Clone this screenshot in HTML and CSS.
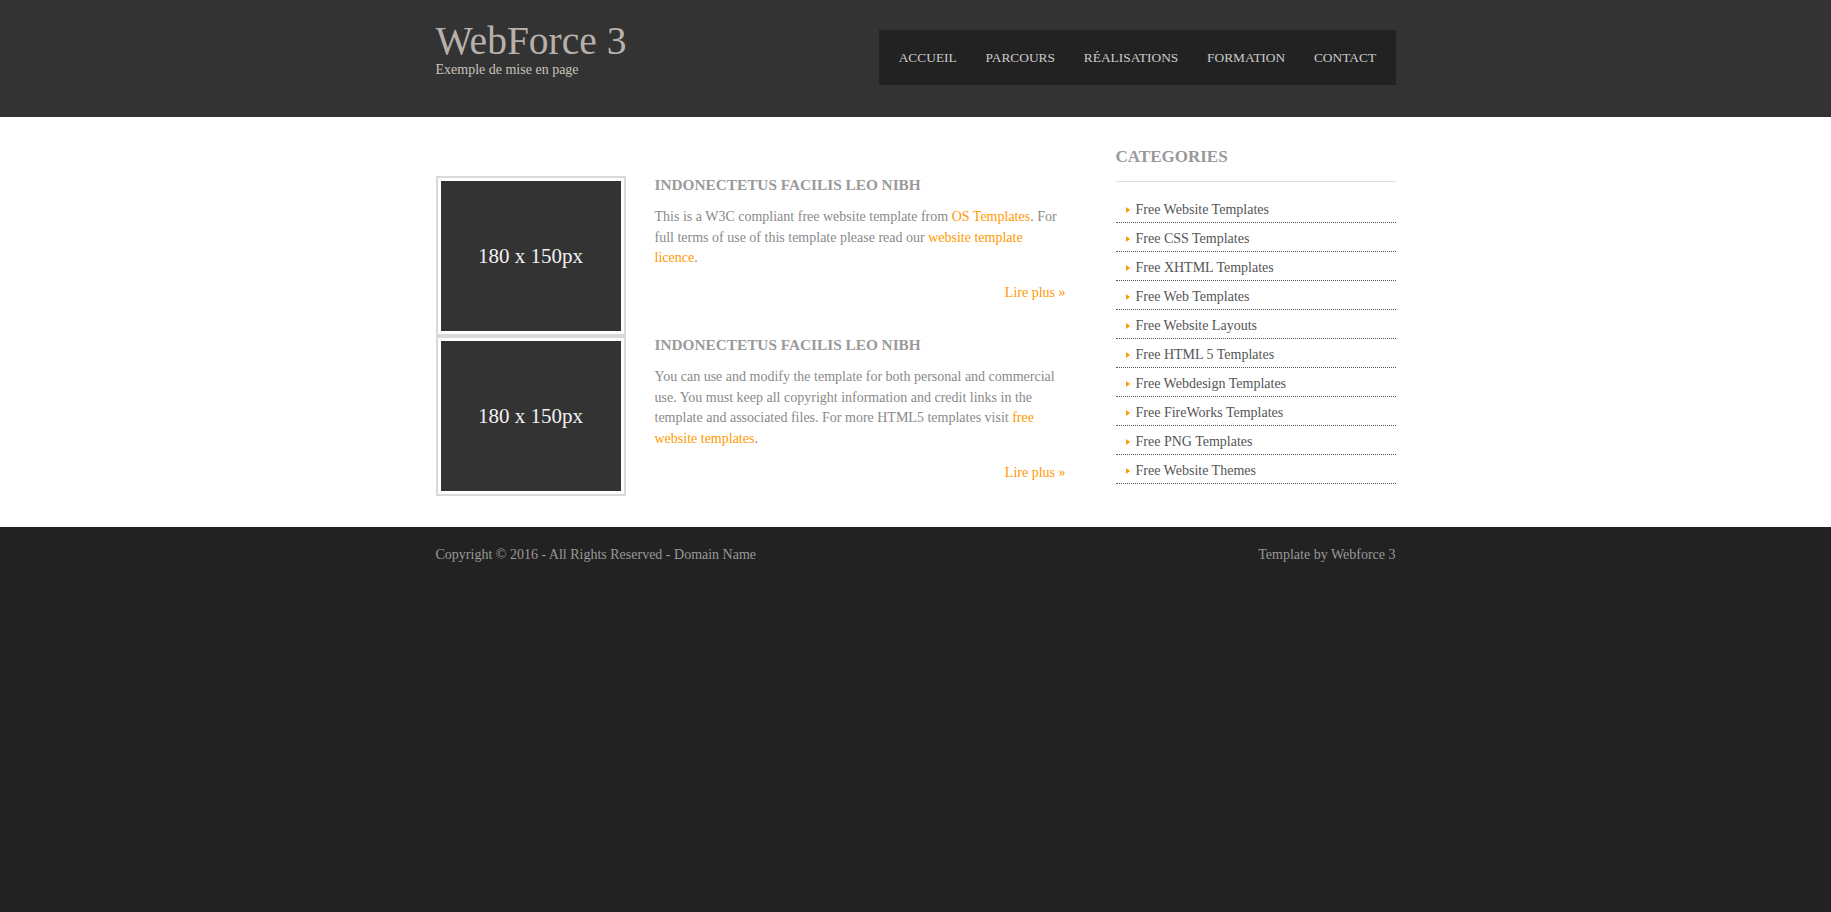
FILE: index.html
```html
<!DOCTYPE html>
<html lang="fr">
<head>
<meta charset="utf-8">
<title>WebForce 3</title>
<link rel="stylesheet" href="styles.css">
</head>
<body>
<header class="site-header">
  <div class="wrap header-inner">
    <div class="logo">
      <h1 class="logo-title">WebForce 3</h1>
      <p class="logo-sub">Exemple de mise en page</p>
    </div>
    <nav class="main-nav">
      <ul class="nav-list">
        <li><a href="#">ACCUEIL</a></li>
        <li><a href="#">PARCOURS</a></li>
        <li><a href="#">RÉALISATIONS</a></li>
        <li><a href="#">FORMATION</a></li>
        <li><a href="#">CONTACT</a></li>
      </ul>
    </nav>
  </div>
</header>

<main class="site-main">
  <div class="wrap main-inner">
    <section class="content">
      <article class="post">
        <div class="thumb"><div class="thumb-img">180 x 150px</div></div>
        <div class="post-body">
          <h2 class="post-title">INDONECTETUS FACILIS LEO NIBH</h2>
          <p class="post-text">This is a W3C compliant free website template from <a href="#">OS Templates</a>. For full terms of use of this template please read our <a href="#">website template licence</a>.</p>
          <p class="more"><a href="#">Lire plus »</a></p>
        </div>
      </article>
      <article class="post">
        <div class="thumb"><div class="thumb-img">180 x 150px</div></div>
        <div class="post-body">
          <h2 class="post-title">INDONECTETUS FACILIS LEO NIBH</h2>
          <p class="post-text">You can use and modify the template for both personal and commercial use. You must keep all copyright information and credit links in the template and associated files. For more HTML5 templates visit <a href="#">free website templates</a>.</p>
          <p class="more"><a href="#">Lire plus »</a></p>
        </div>
      </article>
    </section>

    <aside class="sidebar">
      <h2 class="side-title">CATEGORIES</h2>
      <ul class="cat-list">
        <li><a href="#">Free Website Templates</a></li>
        <li><a href="#">Free CSS Templates</a></li>
        <li><a href="#">Free XHTML Templates</a></li>
        <li><a href="#">Free Web Templates</a></li>
        <li><a href="#">Free Website Layouts</a></li>
        <li><a href="#">Free HTML 5 Templates</a></li>
        <li><a href="#">Free Webdesign Templates</a></li>
        <li><a href="#">Free FireWorks Templates</a></li>
        <li><a href="#">Free PNG Templates</a></li>
        <li><a href="#">Free Website Themes</a></li>
      </ul>
    </aside>
  </div>
</main>

<footer class="site-footer">
  <div class="wrap footer-inner">
    <p class="copy">Copyright © 2016 - All Rights Reserved - <a href="#">Domain Name</a></p>
    <p class="credit">Template by <a href="#">Webforce 3</a></p>
  </div>
</footer>
</body>
</html>
```

FILE: styles.css
```css
* { box-sizing: border-box; }

html, body {
  margin: 0;
  padding: 0;
}

body {
  background: #222222;
  font-family: "Liberation Serif", "Times New Roman", serif;
  font-size: 14px;
  color: #888888;
}

a { text-decoration: none; }

.wrap {
  width: 960px;
  margin: 0 auto;
}

/* Header */
.site-header {
  background: #333333;
  height: 117px;
}

.header-inner {
  display: flex;
  justify-content: space-between;
  align-items: flex-start;
}

.logo {
  padding-top: 22px;
}

.logo-title {
  margin: 0;
  font-size: 39.5px;
  line-height: 39px;
  font-weight: normal;
  color: #b8b1ab;
}

.logo-sub {
  margin: 0;
  font-size: 14px;
  line-height: 18px;
  color: #c9c2bb;
}

.main-nav {
  margin-top: 30px;
  background: #222222;
  height: 55px;
}

.nav-list {
  list-style: none;
  margin: 0;
  padding: 0 5px;
  display: flex;
}

.nav-list a {
  display: block;
  padding: 0 14.4px;
  line-height: 55px;
  font-size: 13.4px;
  color: #cccccc;
}

/* Main */
.site-main {
  background: #ffffff;
  padding: 30px 0 31px;
}

.main-inner {
  display: flex;
  gap: 50px;
}

.content {
  width: 630px;
  padding-top: 29px;
}

.post {
  display: flex;
  align-items: flex-start;
}

.thumb {
  width: 190px;
  height: 160px;
  flex: none;
  border: 2px solid #d9d9d9;
  padding: 3px;
  margin-right: 29px;
}

.thumb-img {
  width: 180px;
  height: 150px;
  background: #333333;
  color: #f2f2f2;
  font-size: 21px;
  display: flex;
  align-items: center;
  justify-content: center;
}

.post-body {
  flex: 1;
  padding-top: 1px;
}

.post-title {
  margin: 0;
  font-size: 15.3px;
  line-height: 16px;
  font-weight: bold;
  color: #9a9a9a;
}

.post-text {
  margin: 14px 0 0;
  font-size: 14px;
  line-height: 20.5px;
  color: #8a8a8a;
}

.post-text a,
.more a {
  color: #ff9900;
}

.more {
  margin: 14px 0 0;
  text-align: right;
  font-size: 14px;
  line-height: 20.5px;
}

/* Sidebar */
.sidebar {
  width: 280px;
}

.side-title {
  margin: 0;
  font-size: 17px;
  line-height: 20px;
  font-weight: bold;
  color: #999999;
  padding-bottom: 14px;
  border-bottom: 1px solid #dddddd;
}

.cat-list {
  list-style: none;
  margin: 12px 0 0;
  padding: 0;
}

.cat-list li {
  border-bottom: 1px dotted #555555;
  padding-top: 4px;
  line-height: 24px;
  font-size: 14px;
}

.cat-list li::before {
  content: "";
  display: inline-block;
  width: 0;
  height: 0;
  border-left: 4px solid #ff9900;
  border-top: 3px solid transparent;
  border-bottom: 3px solid transparent;
  margin: 0 6px 1px 10px;
  vertical-align: middle;
}

.cat-list a {
  color: #555555;
}

/* Footer */
.site-footer {
  background: #222222;
  padding-top: 18px;
}

.footer-inner {
  display: flex;
  justify-content: space-between;
}

.copy,
.credit {
  margin: 0;
  font-size: 14px;
  line-height: 20px;
  color: #999999;
}

.copy a,
.credit a {
  color: #999999;
}
```
